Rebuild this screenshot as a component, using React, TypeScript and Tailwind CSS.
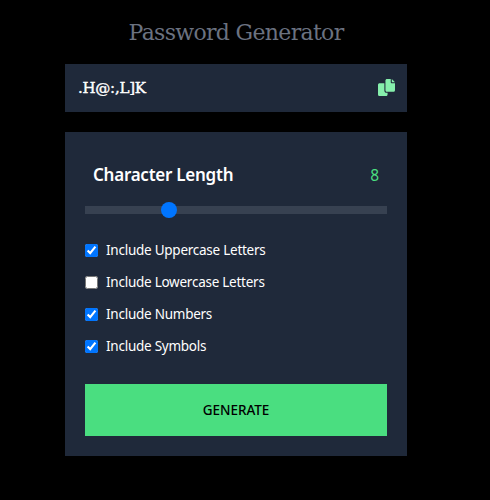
import { useState } from "react";

const sans = "font-['Noto_Sans','Open_Sans',sans-serif]";
const serif = "font-['DejaVu_Serif',serif]";

function CopyIcon() {
  return (
    <svg viewBox="0 0 512 512" className="block h-[17px] w-[17px] fill-[#86efac]">
      <path d="M384 96V0H272c-26.5 0-48 21.5-48 48v288c0 26.5 21.5 48 48 48h192c26.5 0 48-21.5 48-48V128h-95.1C398.4 128 384 113.6 384 96zM416 0v96h96L416 0zM192 352V128H48c-26.5 0-48 21.5-48 48v288c0 26.5 21.5 48 48 48h192c26.5 0 48-21.5 48-48v-48h-32c-35.3 0-64-28.7-64-64z" />
    </svg>
  );
}

const initialOptions = [
  { label: "Include Uppercase Letters", checked: true },
  { label: "Include Lowercase Letters", checked: false },
  { label: "Include Numbers", checked: true },
  { label: "Include Symbols", checked: true },
];

export default function App() {
  const [options, setOptions] = useState(initialOptions);
  const [length, setLength] = useState(8);

  const toggle = (index: number) =>
    setOptions(options.map((o, i) => (i === index ? { ...o, checked: !o.checked } : o)));

  return (
    <div className={`h-[500px] w-[490px] bg-black pl-[65px] pt-4 text-white ${sans}`}>
      <div className="w-[342px]">
        <h1 className={`h-8 whitespace-nowrap pt-px text-center text-[22px] leading-8 tracking-[-0.68px] text-[#6b7280] ${serif}`}>
          Password Generator
        </h1>
        <div className="mt-4 flex h-12 items-center justify-between bg-[#1f293a] pl-[13px] pr-3">
          <span className={`text-[15px] tracking-[-0.25px] [-webkit-text-stroke:0.4px_white] ${serif}`}>.H@:,L]K</span>
          <button aria-label="Copy password" className="pb-[2px]">
            <CopyIcon />
          </button>
        </div>
        <div className="mt-5 h-[324px] bg-[#1f293a] p-5">
          <div className="flex h-[46px] items-center justify-between px-2">
            <span className="whitespace-nowrap text-[17px] font-semibold tracking-[-0.25px]">Character Length</span>
            <span className="pt-px text-[15.5px] text-[#4ade80]">{length}</span>
          </div>
          <input
            type="range"
            min={0}
            max={30}
            value={length}
            onChange={(e) => setLength(Number(e.target.value))}
            className="mt-2 block h-2 w-full appearance-none bg-[#374151] [&::-webkit-slider-thumb]:h-4 [&::-webkit-slider-thumb]:w-4 [&::-webkit-slider-thumb]:appearance-none [&::-webkit-slider-thumb]:rounded-full [&::-webkit-slider-thumb]:bg-[#0075ff]"
          />
          <div className="mt-5 flex flex-col">
            {options.map((o, i) => (
              <label key={o.label} className="flex h-8 items-center gap-2 text-[13.5px]">
                <input type="checkbox" checked={o.checked} onChange={() => toggle(i)} className="h-[13px] w-[13px]" />
                <span className="whitespace-nowrap tracking-[-0.25px]">{o.label}</span>
              </label>
            ))}
          </div>
          <button className="mt-[22px] h-[52px] w-full bg-[#4ade80] text-[13.5px] font-medium tracking-[-0.02px] text-black">
            GENERATE
          </button>
        </div>
      </div>
    </div>
  );
}
